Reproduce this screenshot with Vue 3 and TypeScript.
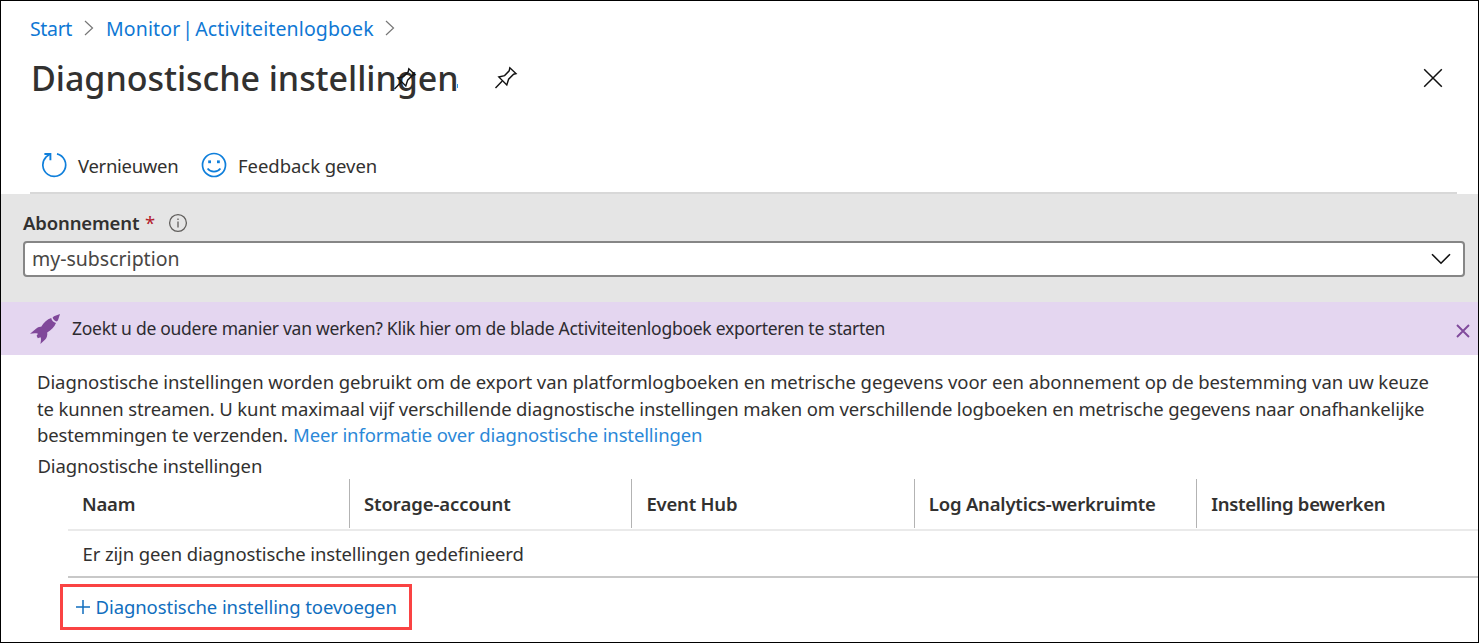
<script setup lang="ts">
interface Column {
  id: string
  label: string
}

const columns: Column[] = [
  { id: 'name', label: 'Naam' },
  { id: 'storage', label: 'Storage-account' },
  { id: 'hub', label: 'Event Hub' },
  { id: 'workspace', label: 'Log Analytics-werkruimte' },
  { id: 'edit', label: 'Instelling bewerken' },
]

const intro: string[] = [
  'Diagnostische instellingen worden gebruikt om de export van platformlogboeken en metrische gegevens voor een abonnement op de bestemming van uw keuze',
  'te kunnen streamen. U kunt maximaal vijf verschillende diagnostische instellingen maken om verschillende logboeken en metrische gegevens naar onafhankelijke',
]
</script>

<template>
  <main class="blade">
    <nav class="crumbs">
      <a class="crumb-start">Start</a>
      <svg class="chev" width="10" height="16" viewBox="0 0 10 16"><path d="M1 1 L8.5 8 L1 15" /></svg>
      <a class="crumb-log">Monitor | Activiteitenlogboek</a>
      <svg class="chev" width="10" height="16" viewBox="0 0 10 16"><path d="M1 1 L8.5 8 L1 15" /></svg>
    </nav>

    <header class="head">
      <h1 class="title">
        <span>Diagnostische instellingen</span>
        <svg class="pin overlay" width="24" height="24" viewBox="0 0 24 24">
          <path d="M1.5 22 L8 15.3 M15.8 1.8 L22 7.6 L19.6 8.2 L14.6 13.2 L12.8 19 L4.8 11 L10.6 9.6 L15.2 4.8 Z" />
        </svg>
        <i class="speck"></i>
      </h1>
      <svg class="pin" width="24" height="24" viewBox="0 0 24 24">
        <path d="M1.5 22 L8 15.3 M15.8 1.8 L22 7.6 L19.6 8.2 L14.6 13.2 L12.8 19 L4.8 11 L10.6 9.6 L15.2 4.8 Z" />
      </svg>
      <svg class="close" width="20" height="20" viewBox="0 0 20 20"><path d="M1.2 1.2 L18.8 18.8 M18.8 1.2 L1.2 18.8" /></svg>
    </header>

    <div class="toolbar">
      <svg class="tool" width="26" height="26" viewBox="0 0 26 26">
        <path d="M16 1.9 A11.4 11.4 0 1 1 5.2 4.9 L9.4 1.8" />
        <path class="arrow" d="M3.4 2 H9.4 V8.2" />
      </svg>
      <span class="refresh">Vernieuwen</span>
      <svg class="tool" width="26" height="26" viewBox="0 0 26 26">
        <circle cx="13" cy="13" r="11.5" />
        <path d="M6.6 16.6 C9.4 20.6 16.6 20.6 19.4 16.6" />
        <rect class="eye" x="7.2" y="8.4" width="2.8" height="2.8" />
        <rect class="eye" x="16" y="8.4" width="2.8" height="2.8" />
      </svg>
      <span class="feedback">Feedback geven</span>
    </div>

    <section class="filter">
      <div class="label">
        <b>Abonnement</b><span class="star">*</span>
        <svg width="20" height="20" viewBox="0 0 20 20">
          <circle cx="10" cy="10" r="8.4" />
          <path d="M10 8.4 V14.4 M10 5.4 V7" />
        </svg>
      </div>
      <div class="select">
        <span>my-subscription</span>
        <svg width="20" height="12" viewBox="0 0 20 12"><path d="M1 1.2 L10 10.2 L19 1.2" /></svg>
      </div>
    </section>

    <section class="banner">
      <svg class="rocket" width="32" height="32" viewBox="0 0 32 32">
        <path d="M31 1 L25 3.2 L23.6 4.6 C24 6.4 25.6 8.2 27.8 8.6 L29 7.2 Z" />
        <path d="M22.2 5 C18.2 6.2 14.8 9.4 12.2 13.8 C10.4 13.4 8.6 14.2 7 15.8 L1 20.8 C4 20.2 7 20 9 20.8 L7.6 22.8 L8.8 25.2 L11.6 24.2 C12.4 26 11.8 28.4 11.4 31 L16.2 26.6 C17.8 24.8 18.6 22.2 18.2 19.4 C22.2 17.2 25.6 14 27 10 C24.6 9.4 22.6 7.4 22.2 5 Z" />
      </svg>
      <span>Zoekt u de oudere manier van werken? Klik hier om de blade Activiteitenlogboek exporteren te starten</span>
      <svg class="dismiss" width="14" height="14" viewBox="0 0 14 14"><path d="M1 1 L13 13 M13 1 L1 13" /></svg>
    </section>

    <section class="intro">
      <p class="line-a">{{ intro[0] }}</p>
      <p class="line-b">{{ intro[1] }}</p>
      <p><span class="line-c">bestemmingen te verzenden.</span><a class="more">Meer informatie over diagnostische instellingen</a></p>
    </section>
    <h2 class="subtitle">Diagnostische instellingen</h2>

    <section class="table">
      <div class="row header">
        <div v-for="c in columns" :key="c.id" class="cell"><span :class="c.id">{{ c.label }}</span></div>
      </div>
      <div class="row empty"><span>Er zijn geen diagnostische instellingen gedefinieerd</span></div>
    </section>

    <button class="add" type="button">
      <svg width="16" height="16" viewBox="0 0 16 16"><path d="M8 1 V15 M1 8 H15" /></svg>
      <span>Diagnostische instelling toevoegen</span>
    </button>
  </main>
</template>

<style>
body { margin: 0; background: #fff; }
</style>

<style scoped>
.blade {
  box-sizing: border-box;
  width: 1479px;
  height: 643px;
  border: 1px solid #000;
  overflow: hidden;
  display: flex;
  flex-direction: column;
  background: #fff;
  color: #323130;
  font: 18.5px/26px "Noto Sans", "Open Sans", sans-serif;
  letter-spacing: -0.15px;
  white-space: nowrap;
}
svg { flex: none; fill: none; stroke: currentColor; }
a { color: #0f78d4; }

.crumbs { display: flex; align-items: center; height: 26px; padding: 14px 0 0 29px; }
.crumbs a { padding-top: 1px; font-size: 19.5px; }
.crumb-start { width: 42px; letter-spacing: -0.35px; }
.crumb-log { width: 267px; letter-spacing: 0.13px; word-spacing: -3.2px; }
.chev { margin: 0 12px; color: #767676; stroke-width: 1.2; }

.head { display: flex; align-items: center; height: 74px; padding-left: 30px; }
.title { position: relative; width: 427px; margin: 0; font-size: 34px; line-height: 48px; font-weight: 500; letter-spacing: -0.04px; }
.pin { margin-left: 36px; color: #111; stroke-width: 1.4; }
.pin.overlay { position: absolute; left: 362px; top: 13px; margin: 0; }
.speck { position: absolute; left: 426px; top: 30px; width: 1px; height: 4px; background: #2f9ae8; }
.close { margin: 0 35px 0 auto; color: #111; stroke-width: 1.5; }

.toolbar { display: flex; align-items: center; box-sizing: border-box; height: 79px; margin: 0 21px 0 29px; padding: 24px 0 0 11px; border-bottom: 2px solid #d8d8d8; }
.tool { margin-bottom: 2px; color: #0f7fdb; stroke-width: 1.7; }
.arrow { stroke-width: 1.9; }
.eye { fill: currentColor; stroke: none; }
.refresh { width: 100px; margin: 0 23px 0 11px; letter-spacing: -0.3px; }
.feedback { margin-left: 11px; letter-spacing: -0.05px; }

.filter { box-sizing: border-box; height: 108px; padding: 16px 13px 0 22px; background: #e5e5e5; }
.label { display: flex; align-items: center; height: 26px; margin-bottom: 5px; }
.label b { width: 117px; font-weight: 600; }
.label svg { margin: 0 0 1px 14px; color: #605e5c; stroke-width: 1.3; }
.star { width: 9px; margin-left: 5px; color: #b3202c; }
.select { display: flex; align-items: center; justify-content: space-between; box-sizing: border-box; height: 36px; padding: 0 12px 0 7px; border: 2px solid #868686; border-radius: 4px; background: #fff; color: #484644; font-size: 19.5px; letter-spacing: 0; }
.select svg { color: #111; stroke-width: 1.6; }

.banner { display: flex; align-items: center; height: 53px; padding: 0 8px 0 29px; background: #e4d6f0; font-size: 17.5px; letter-spacing: -0.27px; color: #2d2b30; }
.banner span { margin-bottom: 2px; }
.rocket { fill: #80489a; stroke: none; margin: 0 11px 0 -1px; }
.dismiss { margin: 4px 0 0 auto; color: #804a9c; stroke-width: 1.9; }

.intro { padding: 14px 0 0 36px; }
.intro p { display: flex; height: 26.5px; margin: 0; }
.intro .line-a { letter-spacing: -0.08px; }
.line-c { width: 251px; margin-right: 5px; }
.more { color: #2b88d8; letter-spacing: -0.13px; }
.subtitle { height: 26px; margin: 4px 0 0 36.5px; font: inherit; }

.table { margin-left: 67px; }
.row { display: flex; box-sizing: border-box; }
.header { height: 52px; border-bottom: 2px solid #eaeaea; font-weight: 600; letter-spacing: -0.2px; }
.cell { flex: none; box-sizing: border-box; width: 282.4px; height: 49px; padding: 12px 0 0 14px; border-left: 1px solid #b3b3b3; }
.cell:first-child { width: 281px; border-left: 0; }
.storage { letter-spacing: -0.08px; }
.edit { letter-spacing: -0.3px; }
.empty { height: 47px; padding: 10px 0 0 14.5px; border-bottom: 2px solid #c8c8c8; letter-spacing: -0.12px; }

.add { display: flex; align-items: center; box-sizing: border-box; width: 352px; height: 46px; margin: 6px 0 0 59px; padding: 0 0 0 11.5px; border: 3px solid #fa4343; background: #fff; color: #106ebe; font: inherit; letter-spacing: -0.07px; }
.add svg { margin-right: 5px; stroke-width: 1.5; }
</style>
